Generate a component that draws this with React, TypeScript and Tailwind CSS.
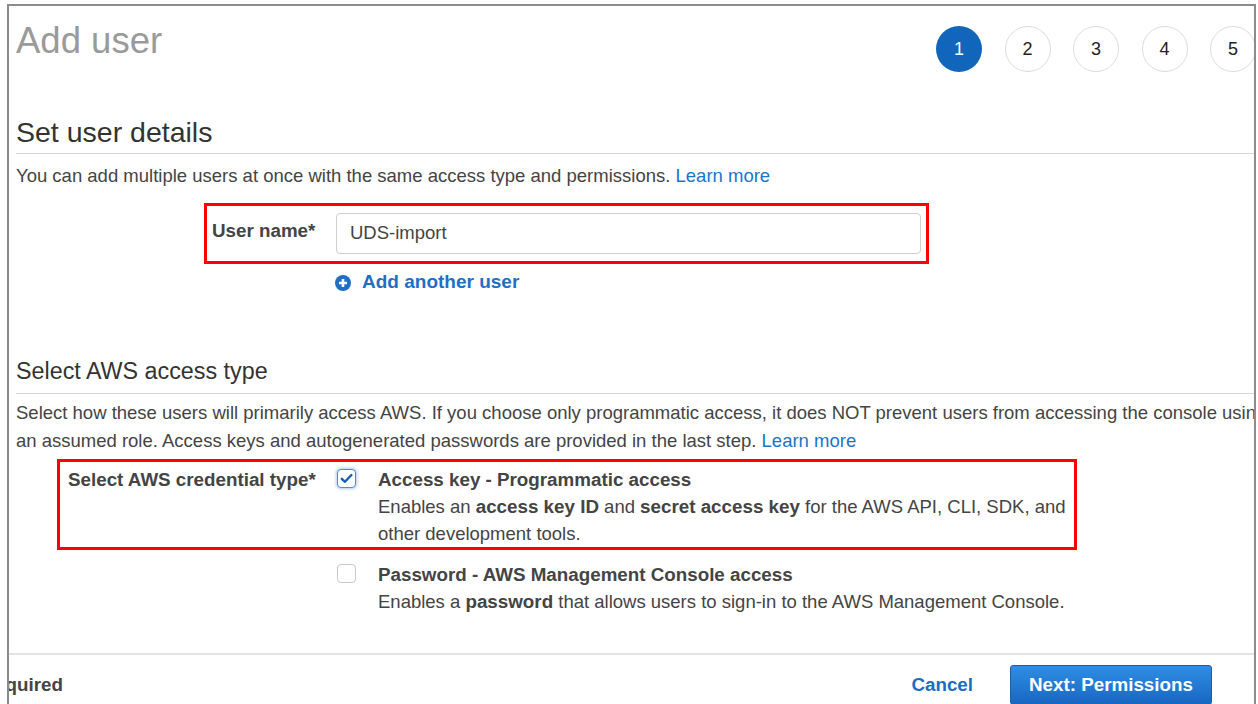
import React from "react";

function Step({ n, active }: { n: number; active?: boolean }) {
  return (
    <div
      className={
        active
          ? "w-[46px] h-[46px] shrink-0 rounded-full bg-[#1166bb] text-white flex items-center justify-center text-[18px]"
          : "w-[46px] h-[46px] shrink-0 rounded-full bg-white border border-[#dcdcdc] text-[#222] flex items-center justify-center text-[18px]"
      }
    >
      {n}
    </div>
  );
}

function CheckBox({ checked }: { checked?: boolean }) {
  return checked ? (
    <div className="w-[19px] h-[19px] shrink-0 mt-[3px] rounded-[4px] border border-[#4a8fd8] bg-white shadow-[0_0_3px_1px_rgba(70,140,220,0.45)] flex items-center justify-center">
      <svg width="13" height="11" viewBox="0 0 13 11">
        <path d="M1.8 5.8 L5 8.8 L11.4 2" fill="none" stroke="#1b5fb3" strokeWidth="2.4" strokeLinecap="round" strokeLinejoin="round" />
      </svg>
    </div>
  ) : (
    <div className="w-[19px] h-[19px] shrink-0 mt-[3px] rounded-[4px] border border-[#c8c8c8] bg-white" />
  );
}

function PlusCircle() {
  return (
    <svg width="16" height="16" viewBox="0 0 16 16" className="shrink-0">
      <circle cx="8" cy="8" r="8" fill="#1f6fc5" />
      <path d="M8 4 V12 M4 8 H12" stroke="#fff" strokeWidth="2.6" />
    </svg>
  );
}

export default function App() {
  return (
    <div className="w-[1258px] h-[704px] overflow-hidden bg-white font-['Liberation_Sans',Arial,Helvetica,sans-serif] text-[#444]">
      <div className="ml-[7px] mt-[4px] w-[1249px] h-[720px] border-x-2 border-t-2 border-[#8c8c8c] overflow-hidden">
        <div className="pl-[7px]">
          {/* title + wizard steps */}
          <div className="flex items-start pt-[15px]">
            <h1 className="mt-[2px] text-[36.5px] leading-none text-[#9a9a9a]">Add user</h1>
            <div className="ml-auto -mr-[2px] mt-[5px] flex gap-[22.5px]">
              <Step n={1} active />
              <Step n={2} />
              <Step n={3} />
              <Step n={4} />
              <Step n={5} />
            </div>
          </div>

          <h2 className="mt-[46px] text-[28.5px] leading-none text-[#333]">Set user details</h2>
          <div className="mt-[6px] border-t border-[#d6d6d6]" />
          <p className="mt-[8px] text-[18.5px] leading-[28px] whitespace-nowrap">
            You can add multiple users at once with the same access type and permissions.{" "}
            <span className="text-[#1a75c7]">Learn more</span>
          </p>

          {/* user name row */}
          <div className="mt-[13px] ml-[188px] w-[725px] border-[3px] border-[#ff0000] flex items-start pl-[5px] pr-[5px] pt-[7px] pb-[7px]">
            <div className="w-[124px] pt-[4px] text-[18.8px] leading-[28px] font-bold">User name*</div>
            <div className="flex-1 h-[41px] border border-[#cfcfcf] rounded-[4px] flex items-center pl-[13px] text-[18.5px] text-[#444]">
              UDS-import
            </div>
          </div>

          <div className="mt-[5px] ml-[319px] flex items-center gap-[11px] h-[28px]">
            <PlusCircle />
            <span className="text-[19px] font-bold text-[#1f6fc5]">Add another user</span>
          </div>

          <h2 className="mt-[63px] text-[23.3px] leading-none text-[#333]">Select AWS access type</h2>
          <div className="mt-[10px] border-t border-[#d6d6d6]" />
          <p className="mt-[5px] text-[18.5px] leading-[28px] whitespace-nowrap">
            Select how these users will primarily access AWS. If you choose only programmatic access, it does NOT prevent users from accessing the console using
            <br />
            an assumed role. Access keys and autogenerated passwords are provided in the last step.{" "}
            <span className="text-[#1a75c7]">Learn more</span>
          </p>

          {/* credential type */}
          <div className="mt-[4px] ml-[41px] w-[1020px] border-[3px] border-[#ff0000] flex items-start pl-[8px] pt-[4px]">
            <div className="w-[269px] text-[18.8px] leading-[27px] font-bold whitespace-nowrap">Select AWS credential type*</div>
            <CheckBox checked />
            <div className="ml-[22px] text-[18.5px] leading-[27px] whitespace-nowrap">
              <div className="font-bold text-[18.8px]">Access key - Programmatic access</div>
              <div>
                Enables an <b className="text-[18.8px]">access key ID</b> and <b className="text-[18.8px]">secret access key</b> for the AWS API, CLI, SDK, and
                <br />
                other development tools.
              </div>
            </div>
          </div>

          <div className="mt-[11px] ml-[321px] flex items-start">
            <CheckBox />
            <div className="ml-[22px] text-[18.5px] leading-[27px] whitespace-nowrap">
              <div className="font-bold text-[18.8px]">Password - AWS Management Console access</div>
              <div>
                Enables a <b className="text-[18.8px]">password</b> that allows users to sign-in to the AWS Management Console.
              </div>
            </div>
          </div>
        </div>

        {/* footer */}
        <div className="mt-[38px] border-t-2 border-[#e2e2e2]">
          <div className="flex items-center pt-[10px]">
            <span className="-ml-[40px] text-[18.8px] font-bold whitespace-nowrap">* Required</span>
            <span className="ml-auto text-[18.8px] font-bold text-[#1c6cc4]">Cancel</span>
            <button className="ml-[37px] mr-[42px] w-[202px] h-[40px] rounded-[3px] border border-[#1a5eab] bg-gradient-to-b from-[#2f8ee4] to-[#1867c2] text-white text-[18.8px] font-bold">
              Next: Permissions
            </button>
          </div>
        </div>
      </div>
    </div>
  );
}
